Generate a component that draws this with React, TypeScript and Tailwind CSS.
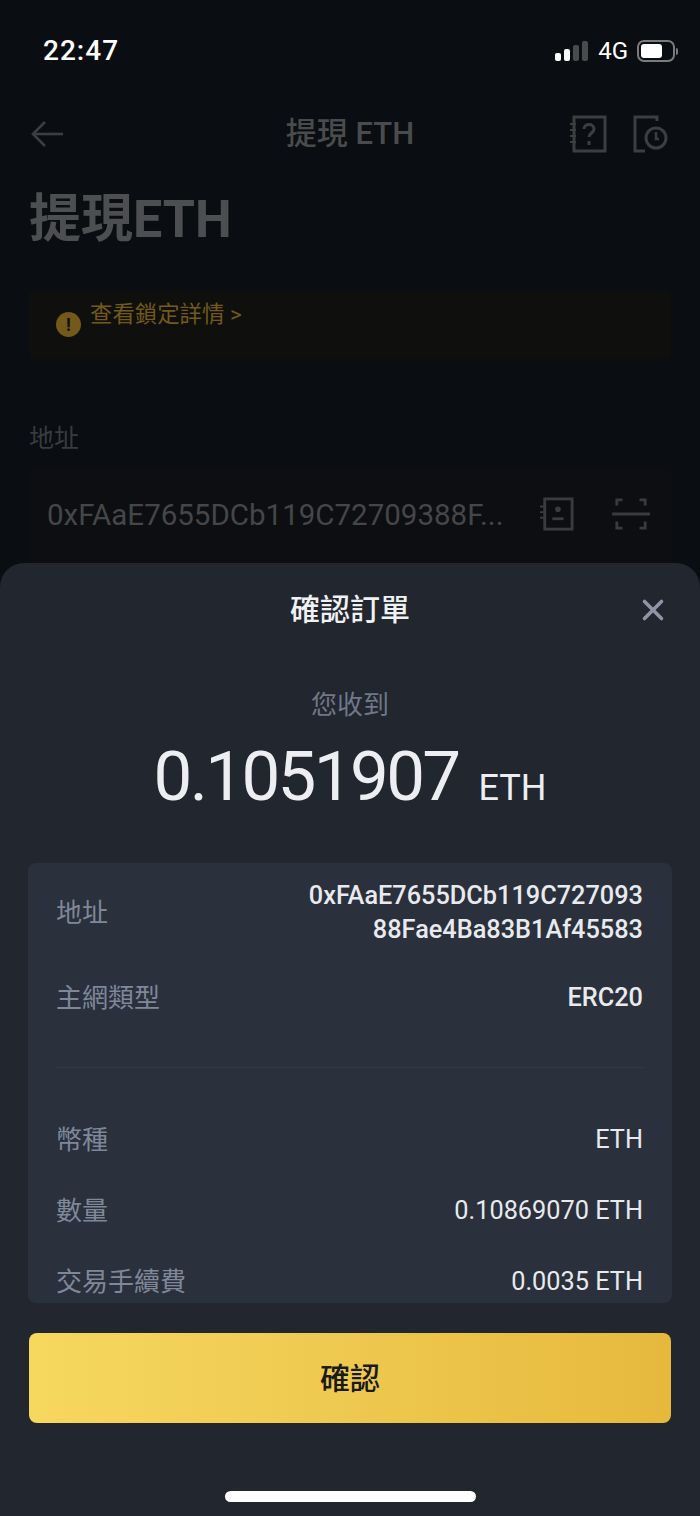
import { X } from "lucide-react";

const FONT = "font-['Roboto','Noto_Sans_CJK_TC',sans-serif]";

function Row({ label, value, className }: { label: string; value: string; className: string }) {
  return (
    <div className={`flex justify-between items-center ${className}`}>
      <span className="text-[26px] leading-[34px] text-[#7f8899]">{label}</span>
      <span className="text-[25.3px] leading-[34px] text-[#e8eaee]">{value}</span>
    </div>
  );
}

function BackArrow() {
  return (
    <svg viewBox="0 0 34 28" className="w-[34px] h-[28px]" fill="none" stroke="#3d3e40" strokeWidth="2.6">
      <path d="M15 2L3 14l12 12" />
      <path d="M3 14h30" />
    </svg>
  );
}

function HelpBookIcon() {
  return (
    <svg viewBox="0 0 38 38" className="w-[38px] h-[38px]" fill="none" stroke="#3d3e40" strokeWidth="3">
      <rect x="5" y="2" width="31" height="34" />
      <path d="M1 9h6M1 15h6M1 21h6M1 27h6" strokeWidth="2" />
      <path d="M15 14c0-6 10-6 10 0 0 4-5 4-5 8" />
      <path d="M20 26v4" />
    </svg>
  );
}

function HistoryIcon() {
  return (
    <svg viewBox="0 0 38 38" className="w-[38px] h-[38px]" fill="none" stroke="#3d3e40" strokeWidth="3">
      <path d="M25 6V2H3v34h10" />
      <circle cx="24" cy="23" r="10" />
      <path d="M24 17v7h3" strokeWidth="2.5" />
    </svg>
  );
}

function ContactBookIcon() {
  return (
    <svg viewBox="0 0 36 36" className="w-[34px] h-[34px]" fill="none" stroke="#3a3b3d" strokeWidth="3">
      <rect x="5" y="2" width="29" height="32" />
      <path d="M0 10h6M0 16h6M0 22h6" strokeWidth="2" />
      <circle cx="19" cy="13" r="3" fill="#3a3b3d" stroke="none" />
      <path d="M13 23h12" />
    </svg>
  );
}

function ScanIcon() {
  return (
    <svg viewBox="0 0 40 36" className="w-[38px] h-[34px]" fill="none" stroke="#3a3b3d" strokeWidth="3">
      <path d="M0 18h40" />
      <path d="M5 9V3h6M29 3h6v6M5 26v7h6M29 33h6v-7" />
    </svg>
  );
}

function StatusBar() {
  return (
    <div className="flex justify-between items-center h-[30px] mt-[36px] pl-[43px] pr-[22px]">
      <span className="text-[28px] leading-[30px] tracking-[1px] font-medium text-white">22:47</span>
      <div className="flex items-center">
        <div className="flex items-end gap-[3px] h-[20px]">
          <div className="w-[6px] h-[8px] rounded-[2px] bg-white" />
          <div className="w-[6px] h-[12px] rounded-[2px] bg-white" />
          <div className="w-[6px] h-[16px] rounded-[2px] bg-[#4a4b4d]" />
          <div className="w-[6px] h-[20px] rounded-[2px] bg-[#4a4b4d]" />
        </div>
        <span className="ml-[10px] text-[24px] leading-[30px] text-white">4G</span>
        <div className="ml-[9px] w-[38px] h-[22px] rounded-[7px] border-2 border-[#7a7b7d] p-[2px] flex">
          <div className="w-[21px] h-full rounded-[3px] bg-white" />
        </div>
        <div className="ml-[1px] w-[2px] h-[7px] rounded-r-sm bg-[#7a7b7d]" />
      </div>
    </div>
  );
}

export default function App() {
  return (
    <div className={`relative w-[700px] h-[1516px] overflow-hidden bg-[#0a0d11] ${FONT}`}>
      <StatusBar />

      {/* pagina de fundo, escurecida */}
      <div className="relative flex items-center justify-between h-[50px] mt-[43px] pl-[30px] pr-[30px]">
        <BackArrow />
        <span className="absolute left-0 right-0 text-center text-[31px] leading-[40px] font-medium text-[#4a4b4d]">提現 ETH</span>
        <div className="flex gap-[25px]">
          <HelpBookIcon />
          <HistoryIcon />
        </div>
      </div>

      <div className="mt-[29px] ml-[29px] text-[52px] leading-[64px] font-bold text-[#4d4e50]">提現ETH</div>

      <div className="mt-[39px] mx-[29px] h-[68px] rounded bg-[#0f100d] flex items-start pl-[27px]">
        <div className="mt-[21px] w-[25px] h-[25px] rounded-full bg-[#73591a] flex items-center justify-center text-[#0f100d] text-[18px] font-bold leading-none">!</div>
        <span className="ml-[9px] mt-[8px] text-[22.4px] leading-[30px] text-[#73591a]">查看鎖定詳情 &gt;</span>
      </div>

      <div className="mt-[63px] ml-[29px] text-[25px] leading-[34px] text-[#3a3b3d]">地址</div>

      <div className="mt-[12px] mx-[29px] h-[110px] rounded-t bg-[#0c0e12] flex items-start pl-[18px] pr-[21px] pt-[27px]">
        <span className="flex-1 text-[29.5px] leading-[40px] text-[#454648]">0xFAaE7655DCb119C72709388F...</span>
        <div className="flex items-center gap-[38px] pt-[2px]">
          <ContactBookIcon />
          <ScanIcon />
        </div>
      </div>

      {/* modal de confirmacao */}
      <div className="absolute left-0 right-0 bottom-0 h-[953px] rounded-t-[24px] bg-[#21262f]">
        <div className="relative h-[46px] mt-[24px] flex items-center justify-center">
          <span className="text-[30px] leading-[46px] font-medium text-[#f0f1f3]">確認訂單</span>
          <X className="absolute right-[30px] top-[6px] w-[34px] h-[34px] text-[#8e96a6]" strokeWidth={2.5} />
        </div>

        <div className="mt-[55px] text-center text-[26px] leading-[34px] text-[#6f7888]">您收到</div>

        <div className="mt-[13px] flex items-baseline justify-center gap-[20px] text-[#eceef2]">
          <span className="text-[69px] leading-[84px] tracking-[-2.6px]">0.1051907</span>
          <span className="text-[36px] leading-[44px]">ETH</span>
        </div>

        <div className="mt-[44px] mx-[28px] h-[440px] overflow-hidden rounded-lg bg-[#2a303c] pl-[28px] pr-[29px]">
          <div className="flex justify-between items-center pt-[16px]">
            <span className="text-[26px] leading-[34px] text-[#7f8899]">地址</span>
            <span className="text-right text-[25.3px] leading-[34px] font-medium text-[#e8eaee]">
              0xFAaE7655DCb119C727093
              <br />
              88Fae4Ba83B1Af45583
            </span>
          </div>
          <div className="flex justify-between items-center mt-[34px]">
            <span className="text-[26px] leading-[34px] text-[#7f8899]">主網類型</span>
            <span className="text-[25.3px] leading-[34px] font-medium text-[#e8eaee]">ERC20</span>
          </div>
          <div className="mt-[52px] h-px bg-[#343a46]" />
          <Row label="幣種" value="ETH" className="mt-[55px]" />
          <Row label="數量" value="0.10869070 ETH" className="mt-[37px]" />
          <Row label="交易手續費" value="0.0035 ETH" className="mt-[37px]" />
        </div>

        <button className="block mt-[30px] mx-[29px] w-[642px] h-[90px] rounded-lg bg-gradient-to-r from-[#f6d85f] to-[#e6b93d] text-[30px] font-medium text-[#1a1a1a]">
          確認
        </button>

        <div className="mt-[68px] mx-auto w-[251px] h-[11px] rounded-full bg-white" />
      </div>
    </div>
  );
}
